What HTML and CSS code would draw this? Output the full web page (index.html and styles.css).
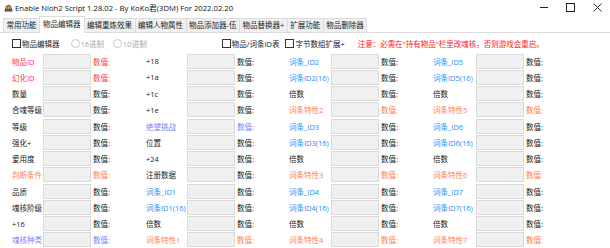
FILE: index.html
```html
<!DOCTYPE html>
<html>
<head>
<meta charset="utf-8">
<link rel="stylesheet" href="styles.css">
</head>
<body>
<div class="window">
  <div class="titlebar">
    <svg class="appicon" width="9" height="8" viewBox="0 0 9 8">
      <path d="M0.5 6.5 L2 2 L4.5 0.8 L7 2 L8.5 6.5 Z" fill="#5a4a3a"/>
      <path d="M2 3 L4.5 2 L7 3 L6.5 5 L2.5 5 Z" fill="#d8b060"/>
      <rect x="3" y="3.4" width="1" height="1" fill="#c02020"/>
      <rect x="5" y="3.4" width="1" height="1" fill="#c02020"/>
      <rect x="0.5" y="6.5" width="8" height="1" fill="#2a2a2a"/>
    </svg>
    <span class="title">Enable Nioh2 Script 1.28.02 - By KoKo君(3DM) For 2022.02.20</span>
    <div class="controls">
      <span class="ctl-min"></span>
      <span class="ctl-max"></span>
      <svg class="ctl-close" width="9" height="9" viewBox="0 0 9 9"><path d="M0.5 0.5 L8.5 8.5 M8.5 0.5 L0.5 8.5" stroke="#222" stroke-width="0.9"/></svg>
    </div>
  </div>
  <div class="tabs">
    <span class="tab">常用功能</span>
    <span class="tab active">物品编辑器</span>
    <span class="tab">编辑重炼效果</span>
    <span class="tab">编辑人物属性</span>
    <span class="tab">物品添加器-伍</span>
    <span class="tab">物品替换器+</span>
    <span class="tab">扩展功能</span>
    <span class="tab">物品删除器</span>
  </div>
  <div class="page">
    <div class="options">
      <label class="opt"><span class="cb"></span>物品编辑器</label>
      <label class="opt dis opt-r1"><span class="rd"></span>16进制</label>
      <label class="opt dis opt-r2"><span class="rd"></span>10进制</label>
      <label class="opt opt-ids"><span class="cb"></span>物品/词条ID表</label>
      <label class="opt opt-bytes"><span class="cb"></span>字节数组扩展+</label>
      <span class="warn">注意：必需在"持有物品"栏里改魂核，否则游戏会重启。</span>
    </div>
    <div class="grid">
      <span class="lbl r">物品ID</span><span class="box"></span><span class="val r">数值:</span>
      <span class="lbl">+18</span><span class="box"></span><span class="val">数值:</span>
      <span class="lbl b">词条_ID2</span><span class="box"></span><span class="val">数值:</span>
      <span class="lbl b">词条_ID5</span><span class="box"></span><span class="val">数值:</span>

      <span class="lbl r">幻化ID</span><span class="box"></span><span class="val r">数值:</span>
      <span class="lbl">+1a</span><span class="box"></span><span class="val">数值:</span>
      <span class="lbl b">词条ID2(16)</span><span class="box"></span><span class="val">数值:</span>
      <span class="lbl b">词条ID5(16)</span><span class="box"></span><span class="val">数值:</span>

      <span class="lbl">数量</span><span class="box"></span><span class="val">数值:</span>
      <span class="lbl">+1c</span><span class="box"></span><span class="val">数值:</span>
      <span class="lbl">倍数</span><span class="box"></span><span class="val">数值:</span>
      <span class="lbl">倍数</span><span class="box"></span><span class="val">数值:</span>

      <span class="lbl">合魂等级</span><span class="box"></span><span class="val">数值:</span>
      <span class="lbl">+1e</span><span class="box"></span><span class="val">数值:</span>
      <span class="lbl o">词条特性2</span><span class="box"></span><span class="val o">数值:</span>
      <span class="lbl o">词条特性5</span><span class="box"></span><span class="val o">数值:</span>

      <span class="lbl">等级</span><span class="box"></span><span class="val">数值:</span>
      <span class="lbl p">绝望挑战</span><span class="box"></span><span class="val p">数值:</span>
      <span class="lbl b">词条_ID3</span><span class="box"></span><span class="val">数值:</span>
      <span class="lbl b">词条_ID6</span><span class="box"></span><span class="val">数值:</span>

      <span class="lbl">强化+</span><span class="box"></span><span class="val">数值:</span>
      <span class="lbl">位置</span><span class="box"></span><span class="val">数值:</span>
      <span class="lbl b">词条ID3(16)</span><span class="box"></span><span class="val">数值:</span>
      <span class="lbl b">词条ID6(16)</span><span class="box"></span><span class="val">数值:</span>

      <span class="lbl">爱用度</span><span class="box"></span><span class="val">数值:</span>
      <span class="lbl">+24</span><span class="box"></span><span class="val">数值:</span>
      <span class="lbl">倍数</span><span class="box"></span><span class="val">数值:</span>
      <span class="lbl">倍数</span><span class="box"></span><span class="val">数值:</span>

      <span class="lbl o">判断条件</span><span class="box"></span><span class="val o">数值:</span>
      <span class="lbl">注册数据</span><span class="box"></span><span class="val">数值:</span>
      <span class="lbl o">词条特性3</span><span class="box"></span><span class="val o">数值:</span>
      <span class="lbl o">词条特性6</span><span class="box"></span><span class="val o">数值:</span>

      <span class="lbl">品质</span><span class="box"></span><span class="val">数值:</span>
      <span class="lbl b">词条_ID1</span><span class="box"></span><span class="val">数值:</span>
      <span class="lbl b">词条_ID4</span><span class="box"></span><span class="val">数值:</span>
      <span class="lbl b">词条_ID7</span><span class="box"></span><span class="val">数值:</span>

      <span class="lbl">魂核阶级</span><span class="box"></span><span class="val">数值:</span>
      <span class="lbl b">词条ID1(16)</span><span class="box"></span><span class="val">数值:</span>
      <span class="lbl b">词条ID4(16)</span><span class="box"></span><span class="val">数值:</span>
      <span class="lbl b">词条ID7(16)</span><span class="box"></span><span class="val">数值:</span>

      <span class="lbl">+16</span><span class="box"></span><span class="val">数值:</span>
      <span class="lbl">倍数</span><span class="box"></span><span class="val">数值:</span>
      <span class="lbl">倍数</span><span class="box"></span><span class="val">数值:</span>
      <span class="lbl">倍数</span><span class="box"></span><span class="val">数值:</span>

      <span class="lbl p">魂核种类</span><span class="box"></span><span class="val p">数值:</span>
      <span class="lbl o">词条特性1</span><span class="box"></span><span class="val o">数值:</span>
      <span class="lbl o">词条特性4</span><span class="box"></span><span class="val o">数值:</span>
      <span class="lbl o">词条特性7</span><span class="box"></span><span class="val o">数值:</span>
    </div>
  </div>
</div>
</body>
</html>
```

FILE: styles.css
```css
html, body {
  margin: 0;
  padding: 0;
  background: #ffffff;
  overflow: hidden;
}
.window {
  width: 610px;
  height: 248px;
  font-family: "Open Sans", "Noto Sans CJK SC", sans-serif;
  font-size: 7.5px;
  color: #1a1a1a;
  background: #ffffff;
  overflow: hidden;
}
.titlebar {
  height: 15px;
  display: flex;
  align-items: center;
  padding-left: 4px;
}
.appicon {
  flex: none;
  margin-right: 2px;
}
.title {
  font-size: 7.7px;
  color: #111;
  white-space: nowrap;
}
.controls {
  margin-left: auto;
  display: flex;
  align-items: center;
  gap: 18px;
  padding-right: 8px;
}
.ctl-min {
  display: block;
  width: 8px;
  height: 1px;
  background: #222;
}
.ctl-max {
  display: block;
  width: 7px;
  height: 7px;
  border: 1px solid #222;
}
.ctl-close {
  display: block;
}
.tabs {
  height: 17px;
  display: flex;
  align-items: flex-end;
  padding-left: 3px;
  border-bottom: 1px solid #dcdcdc;
}
.tab {
  height: 14px;
  line-height: 13px;
  padding: 0 2.5px;
  background: #f0f0f0;
  border: 1px solid #dcdcdc;
  border-bottom: none;
  margin-right: -1px;
  white-space: nowrap;
  box-sizing: border-box;
}
.tab.active {
  height: 17px;
  line-height: 15px;
  background: #ffffff;
  margin-bottom: -1px;
  padding: 0 3px 1px;
}
.page {
  padding-top: 4px;
}
.options {
  height: 13px;
  display: flex;
  align-items: center;
  padding-left: 12px;
  white-space: nowrap;
}
.opt {
  display: flex;
  align-items: center;
}
.cb {
  width: 7px;
  height: 7px;
  border: 1px solid #333;
  background: #fff;
  margin-right: 1px;
}
.rd {
  width: 7px;
  height: 7px;
  border: 1px solid #c8c8c8;
  border-radius: 50%;
  margin-right: 1px;
}
.dis {
  color: #a6a6a6;
}
.opt-r1 { margin-left: 11px; }
.opt-r2 { margin-left: 9px; }
.opt-ids { margin-left: 75px; }
.opt-bytes { margin-left: 6px; }
.warn {
  margin-left: 13px;
  color: #ff1a1a;
}
.grid {
  margin-top: 3px;
  padding-left: 12px;
  display: grid;
  grid-template-columns: 31px 48px 55px 41px 48px 54px 42px 48px 54px 43px 48px 1fr;
  grid-auto-rows: 16.25px;
  align-items: center;
  white-space: nowrap;
}
.box {
  height: 15px;
  box-sizing: border-box;
  background: #f0f0f0;
  border: 1px solid #dadada;
}
.val {
  padding-left: 2px;
}
.r { color: #ff3c3c; }
.o { color: #ff7f50; }
.b { color: #1e8fff; }
.p { color: #8080ff; }
```
